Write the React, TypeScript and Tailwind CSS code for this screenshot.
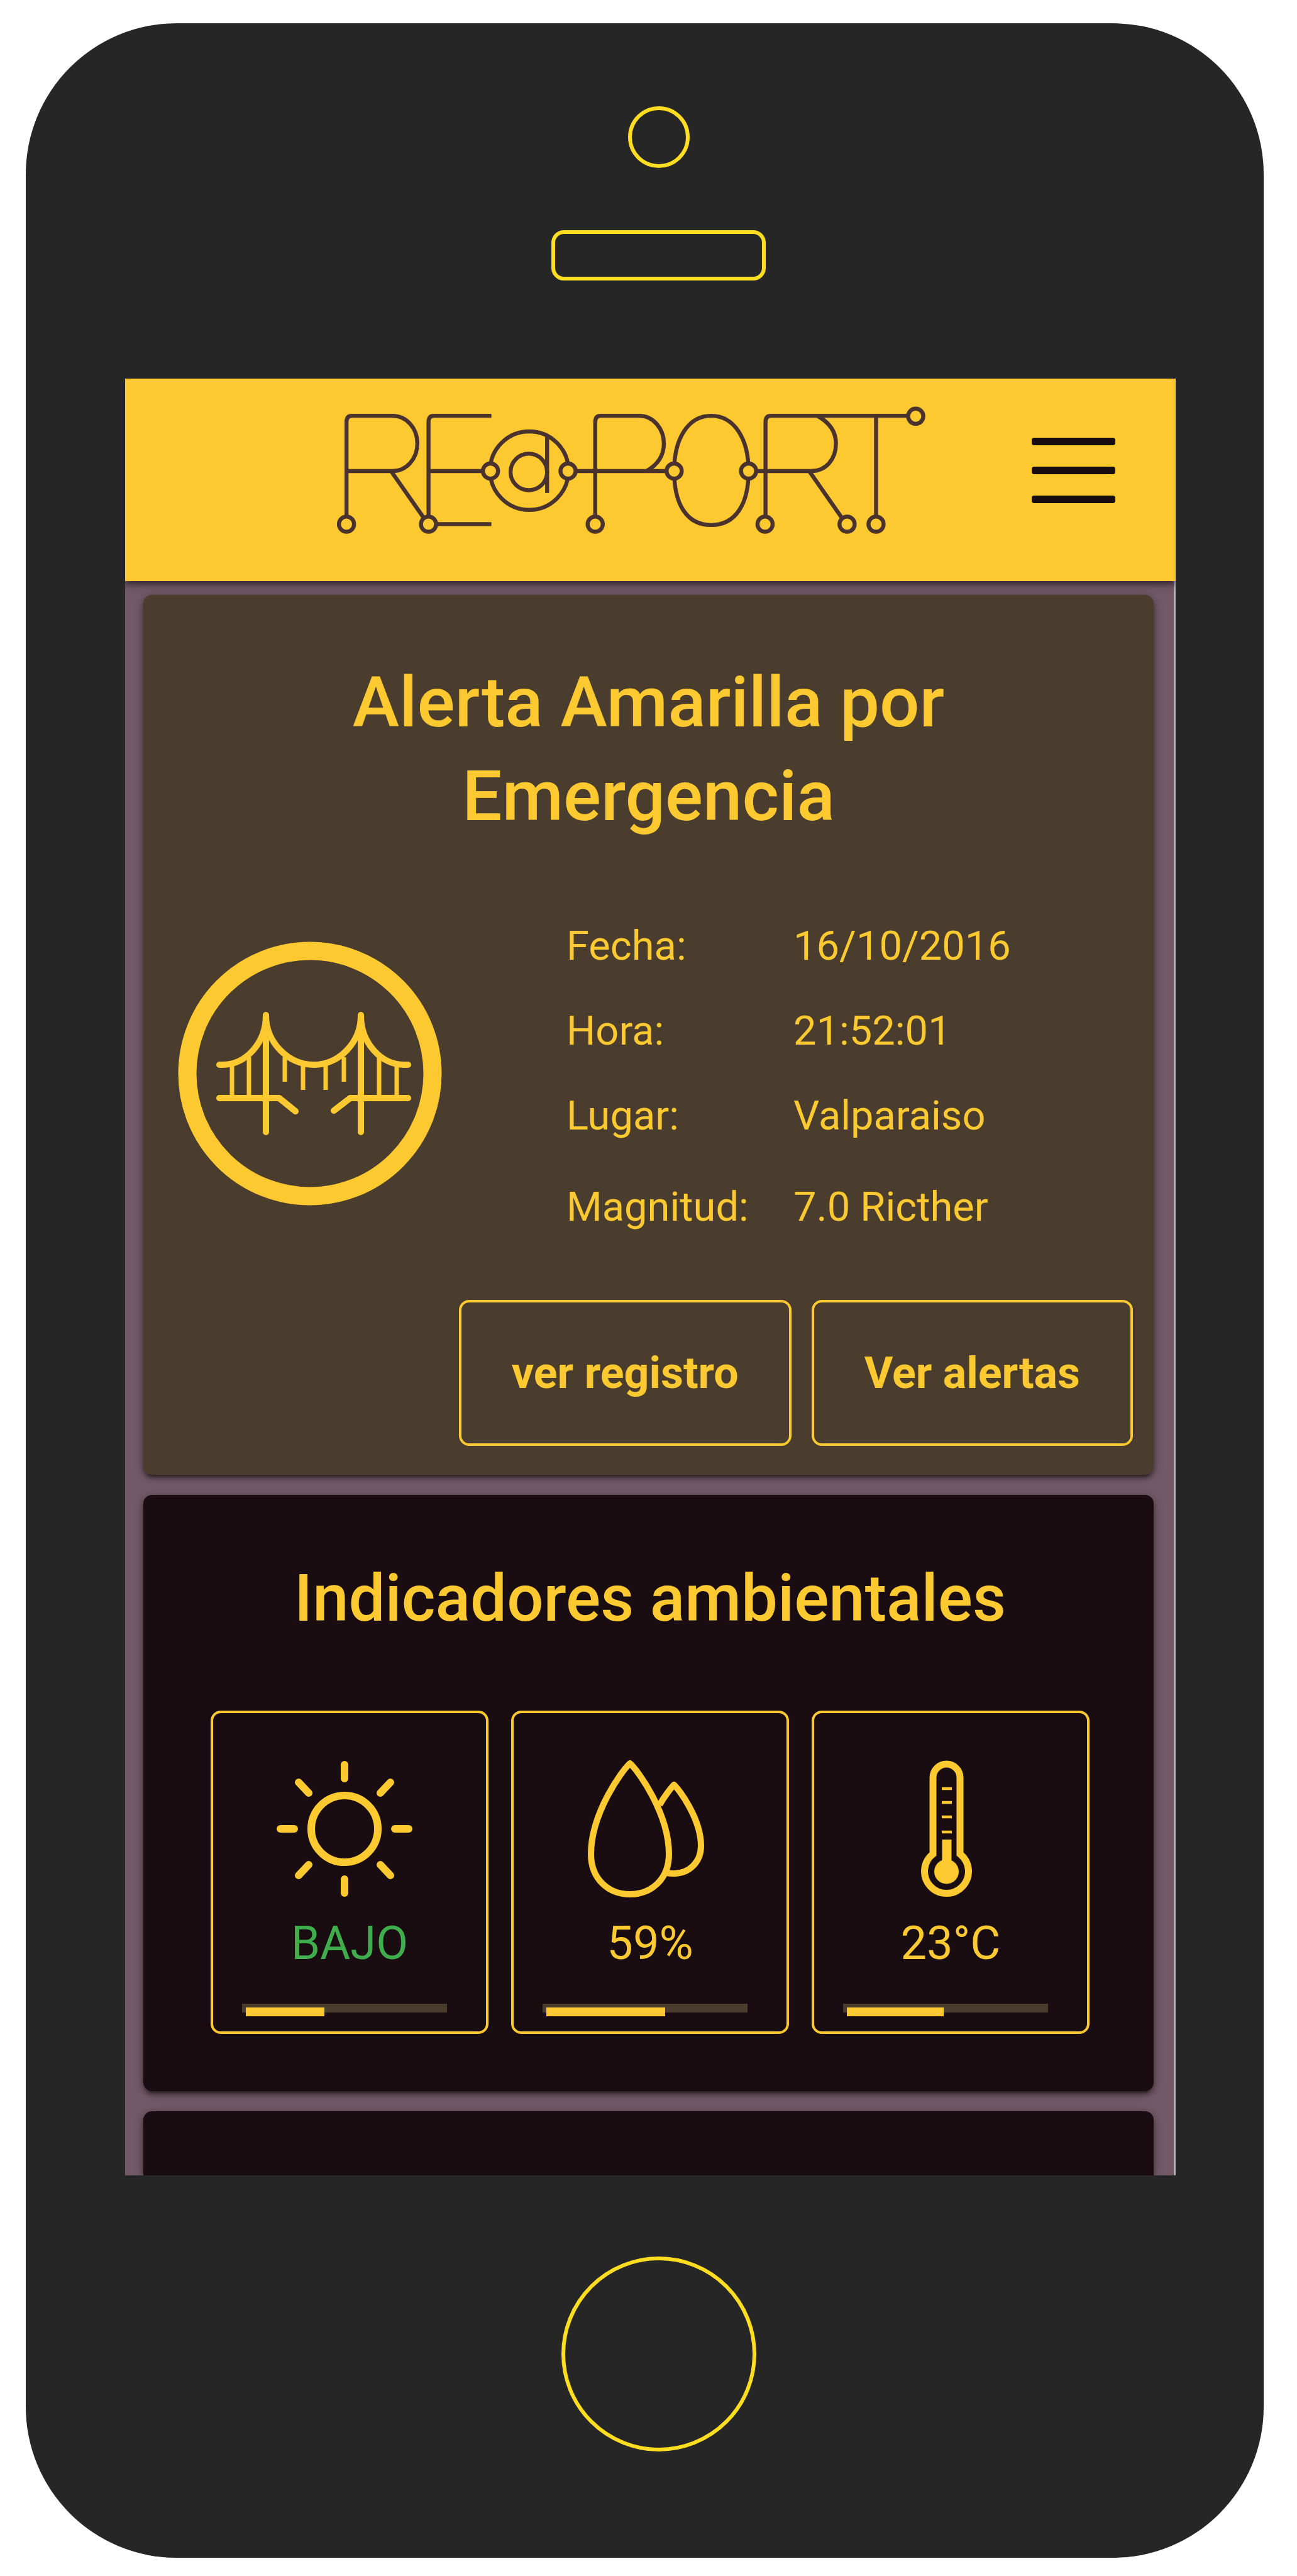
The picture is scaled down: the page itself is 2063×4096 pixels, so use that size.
import React from "react";

const details = [
  { label: "Fecha:", value: "16/10/2016", line: "leading-[135px]" },
  { label: "Hora:", value: "21:52:01", line: "leading-[135px]" },
  { label: "Lugar:", value: "Valparaiso", line: "leading-[135px]" },
  { label: "Magnitud:", value: "7.0 Ricther", line: "leading-[155px]" },
];

function Logo() {
  const nodes = [
    [777, 1175],
    [961, 1175],
    [1100, 1056],
    [1274, 1056],
    [1335, 1175],
    [1512, 1056],
    [1679, 1056],
    [1716, 1175],
    [1900, 1175],
    [1965, 1175],
    [2054, 933],
  ];
  return (
    <svg
      viewBox="750 905 1330 300"
      role="img"
      aria-label="RE@PORT"
      className="w-[943px] shrink-0"
      fill="none"
      stroke="#4a322e"
      strokeWidth="9"
    >
      {/* R */}
      <path d="M777 1157V946Q777 932 789 932H880C912 932 936 960 936 994S912 1056 880 1056H777" />
      <path d="M877 1056L949 1159" />
      {/* E */}
      <path d="M961 1157V946Q961 932 973 932H1102M961 1056H1082M979 1175H1102" />
      {/* at sign */}
      <circle cx="1187" cy="1055" r="88" />
      <circle cx="1186" cy="1058" r="41" />
      <path d="M1227 974V1105" />
      {/* P */}
      <path d="M1335 1157V946Q1335 932 1347 932H1434C1466 932 1489 962 1489 994Q1489 1034 1450 1056M1292 1056H1494" />
      {/* O */}
      <path d="M1512 1056C1512 982 1544 932 1595 932S1679 982 1679 1056C1679 1130 1650 1177 1595 1177S1512 1130 1512 1056Z" />
      {/* R */}
      <path d="M1717 1157V946Q1717 932 1729 932H2036M1833 932Q1875 955 1875 994C1875 1030 1852 1056 1820 1056H1697" />
      <path d="M1815 1056L1887 1159" />
      {/* T */}
      <path d="M1965 932V1157" />
      {nodes.map(([cx, cy]) => (
        <circle key={`${cx}-${cy}`} cx={cx} cy={cy} r="17" fill="#fcc930" />
      ))}
    </svg>
  );
}

function BridgeIcon() {
  return (
    <svg
      viewBox="0 0 420 420"
      className="size-[420px] shrink-0"
      fill="none"
      stroke="#fcc930"
      strokeWidth="10"
      strokeLinecap="round"
      strokeLinejoin="round"
      aria-hidden="true"
    >
      <circle cx="210" cy="210" r="195" strokeWidth="29" />
      <path d="M140 117V303M291 117V303" />
      <path d="M66 196H71C109 196 140 160 140 118C140 160 175 196 216 196S291 160 291 118C291 160 322 196 360 196H366" />
      <path d="M66 249H161L187 270M366 249H274L248 269" />
      <path
        d="M86 196V249M113 184V249M170 184V223M199 196V236M235 196V236M264 184V223M320 184V249M348 196V249"
        strokeWidth="7"
        strokeLinecap="butt"
      />
    </svg>
  );
}

function SunIcon() {
  return (
    <svg
      viewBox="0 0 220 220"
      className="size-[220px]"
      fill="none"
      stroke="#fcc930"
      strokeWidth="12"
      strokeLinecap="round"
      aria-hidden="true"
    >
      <circle cx="110" cy="110" r="53" />
      <path d="M110 8V30M110 190V212M8 110H30M190 110H212M37 36L53 53M167 53L183 36M37 184L53 167M167 167L183 184" />
    </svg>
  );
}

function DropsIcon() {
  return (
    <svg
      viewBox="2 0 220 220"
      className="size-[220px]"
      fill="none"
      stroke="#fcc930"
      strokeWidth="10"
      strokeLinejoin="round"
      aria-hidden="true"
    >
      <path d="M88 6C100 16 150 85 150 150C150 190 122 214 88 214S26 190 26 150C26 85 76 16 88 6Z" />
      <path d="M135 72C143 58 154 44 158 40C166 47 201 94 201 137C201 163 182 181 158 181Q152 181 146 180" />
    </svg>
  );
}

function ThermometerIcon() {
  return (
    <svg
      viewBox="0 0 220 220"
      className="size-[220px]"
      fill="none"
      stroke="#fcc930"
      strokeWidth="11"
      aria-hidden="true"
    >
      <path d="M90 150V28.500A21.500 21.500 0 0 1 133 28.500V150A35 35 0 1 1 90 150Z" />
      <circle cx="111.500" cy="178" r="19.500" fill="#fcc930" stroke="none" />
      <path d="M112 127V170" strokeWidth="15" />
      <path d="M104 46H120M104 68H120M104 91H120M104 115H120" strokeWidth="4.500" />
    </svg>
  );
}

const indicators = [
  { name: "Radiación", icon: <SunIcon />, text: "BAJO", color: "text-[#40ad4c]", level: 39 },
  { name: "Humedad", icon: <DropsIcon />, text: "59%", color: "text-[#fcc930]", level: 59 },
  { name: "Temperatura", icon: <ThermometerIcon />, text: "23°C", color: "text-[#fcc930]", level: 48 },
];

const cardShadow =
  "shadow-[0_6px_6px_rgba(0,0,0,0.25),0_9px_3px_-6px_rgba(0,0,0,0.25),0_3px_16px_rgba(0,0,0,0.4)]";

const actionButton =
  "h-[232px] rounded-2xl border-4 border-[#fcc930] px-20 text-[70px] font-bold";

export default function App() {
  return (
    <div className="bg-white pt-[37px] pr-[53px] pb-[29px] pl-[41px] font-['Roboto',sans-serif] text-[#fcc930]">
      <div className="rounded-[240px] bg-[#262626] pt-[132px] pb-[169px]">
        <div className="flex flex-col items-center pl-11">
          <div className="size-[98px] rounded-full border-[6px] border-[#ffdd21]" />
          <div className="mt-[99px] h-20 w-[341px] rounded-[20px] border-[6px] border-[#ffdd21]" />
        </div>

        <div className="mt-[156px] mr-[140px] ml-[158px] overflow-hidden bg-[#745a68]">
          <header className="relative flex h-[322px] items-center justify-between bg-[#fcc930] pr-24 pb-[30px] pl-[333px] shadow-[0_6px_6px_rgba(0,0,0,0.25),0_3px_16px_rgba(0,0,0,0.45)]">
            <Logo />
            <button type="button" aria-label="Menú" className="flex w-[133px] flex-col gap-[34px]">
              <span className="h-3 rounded-sm bg-[#190d11]" />
              <span className="h-3 rounded-sm bg-[#190d11]" />
              <span className="h-3 rounded-sm bg-[#190d11]" />
            </button>
          </header>

          <main className="flex flex-col gap-8 border-r-[3px] border-[#b0b2b2] pt-[22px] pr-8 pl-[29px]">
            <section className={`rounded-[14px] bg-[#4b3d2d] pt-24 pb-[46px] ${cardShadow}`}>
              <h1 className="px-24 text-center text-[112px] leading-[149px] font-medium">
                Alerta Amarilla por Emergencia
              </h1>
              <div className="mt-[97px] flex items-start gap-[198px] pl-[55px]">
                <div className="pt-[60px]">
                  <BridgeIcon />
                </div>
                <dl className="flex-1 text-[65px]">
                  {details.map((d) => (
                    <div key={d.label} className={`flex ${d.line}`}>
                      <dt className="w-[361px] shrink-0">{d.label}</dt>
                      <dd>{d.value}</dd>
                    </div>
                  ))}
                </dl>
              </div>
              <div className="mt-[70px] flex justify-end gap-8 pr-[33px]">
                <button type="button" className={actionButton}>
                  ver registro
                </button>
                <button type="button" className={actionButton}>
                  Ver alertas
                </button>
              </div>
            </section>

            <section className={`rounded-[14px] bg-[#190d11] pt-24 pr-[102px] pb-[91px] pl-[107px] ${cardShadow}`}>
              <h2 className="text-center text-[103px] leading-[137px] font-medium">Indicadores ambientales</h2>
              <div className="mt-[110px] grid grid-cols-3 gap-9">
                {indicators.map((item) => (
                  <div
                    key={item.name}
                    className="flex flex-col rounded-2xl border-4 border-[#fcc930] pt-[74px] pb-[30px]"
                  >
                    <div className="flex justify-center pr-4">{item.icon}</div>
                    <p className={`mt-7 text-center text-[74px] leading-[88px] ${item.color}`}>{item.text}</p>
                    <div
                      role="progressbar"
                      aria-label={item.name}
                      aria-valuenow={item.level}
                      className="mt-[52px] mr-[62px] ml-[46px] flex h-3.5 bg-[#4b3d2d] pt-1.5 pl-1.5"
                    >
                      <div className="h-3.5 bg-[#fcc930]" style={{ width: `${item.level}%` }} />
                    </div>
                  </div>
                ))}
              </div>
            </section>

            <section className={`h-[102px] rounded-t-[14px] bg-[#190d11] ${cardShadow}`} />
          </main>
        </div>

        <div className="mt-[129px] flex justify-center pl-11">
          <button
            type="button"
            aria-label="Inicio"
            className="size-[310px] rounded-full border-[6px] border-[#ffdd21]"
          />
        </div>
      </div>
    </div>
  );
}
